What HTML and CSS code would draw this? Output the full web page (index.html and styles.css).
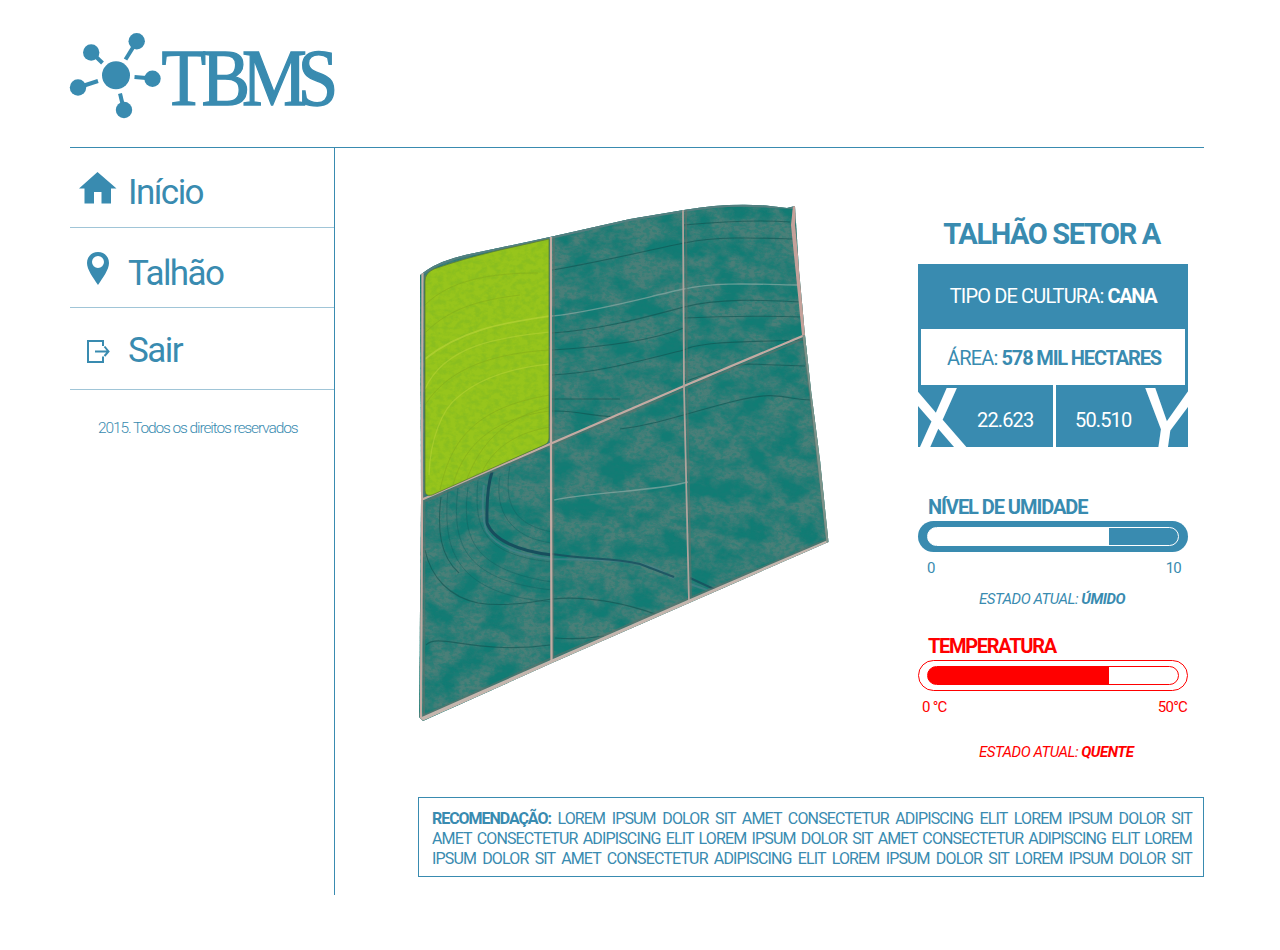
FILE: index.html
```html
<!DOCTYPE html>
<html lang="pt-BR">
<head>
<meta charset="utf-8">
<title>TBMS</title>
<link rel="stylesheet" href="styles.css">
</head>
<body>
<div class="page">
  <header class="header">
    <svg class="logo" width="270" height="90" viewBox="68 30 270 90" role="img" aria-label="TBMS">
      <g class="logo-links">
        <path d="M91 52 102.500 63"/><path d="M137 41 125.500 59.500"/><path d="M152 78.500 134.500 77"/><path d="M124 110 120 93.500"/><path d="M78 87.500 98 81"/>
      </g>
      <g class="logo-nodes">
        <circle cx="116" cy="75.300" r="14"/><circle cx="91.200" cy="52.500" r="8.200"/><circle cx="136.700" cy="41.200" r="8.200"/><circle cx="152.500" cy="78.700" r="8.200"/><circle cx="124" cy="110" r="8.200"/><circle cx="78" cy="87.500" r="8.200"/>
      </g>
      <text class="logo-text" transform="translate(161 105) scale(.9 1)" x="0.500 45 90 152" y="0">TBMS</text>
    </svg>
  </header>

  <div class="body">
    <aside class="sidebar">
      <nav class="menu">
        <a class="menu-item item-home"><svg class="menu-icon" width="38" height="34" viewBox="0 0 38 34"><path class="solid" d="M18.500 1 37.500 17.500H32V32.500H22.500V21H15V32.500H5.500V17.500H0Z"/></svg><span>Início</span></a>
        <a class="menu-item item-field"><svg class="menu-icon" width="38" height="34" viewBox="0 0 38 34"><path class="solid" fill-rule="evenodd" d="M19 0C12.500 0 8 5 8 11 8 17.500 14 25.500 19 33 24 25.500 30 17.500 30 11 30 5 25.500 0 19 0ZM19 4A6 6 0 1 1 19 16 6 6 0 1 1 19 4Z"/></svg><span>Talhão</span></a>
        <a class="menu-item item-exit"><svg class="menu-icon" width="38" height="34" viewBox="0 0 38 34"><path class="line" d="M24 12V7H9V28H24V22.500M16 17.500H29M25.500 12.500 29.500 17.500 25.500 22"/></svg><span>Sair</span></a>
      </nav>
      <p class="copyright">2015. Todos os direitos reservados</p>
    </aside>

    <main class="content">
      <div class="overview">
        <svg class="map" width="412" height="520" viewBox="418 202 412 520" role="img" aria-label="Mapa dos talhões">
          <defs>
            <filter id="patches" x="0" y="0" width="1" height="1" color-interpolation-filters="sRGB">
              <feTurbulence type="fractalNoise" baseFrequency=".035 .05" numOctaves="6" seed="21"/>
              <feColorMatrix values="0 0 0 0 .36  0 0 0 0 .5  0 0 0 0 .48  3 0 0 0 -.900"/>
            </filter>
            <filter id="grain" x="0" y="0" width="1" height="1" color-interpolation-filters="sRGB">
              <feTurbulence type="fractalNoise" baseFrequency=".2 .3" numOctaves="3" seed="3"/>
              <feColorMatrix values="0 0 0 0 .04  0 0 0 0 .5  0 0 0 0 .46  4 0 0 0 -1.700"/>
            </filter>
            <filter id="leaf-grain" x="0" y="0" width="1" height="1" color-interpolation-filters="sRGB">
              <feTurbulence type="fractalNoise" baseFrequency=".16 .2" numOctaves="3" seed="5"/>
              <feColorMatrix values="0 0 0 0 .45  0 0 0 0 .7  0 0 0 0 .15  3 0 0 0 -1.200"/>
            </filter>
            <clipPath id="land"><path d="M420 275 427 270Q440 261 465 255L550 237 630 219 684 210Q730 202 770 206L787 208 795 206 799 270 805 335 811 390 820 460 828.500 542 688 603.500 552 663 423 721 419 717 421 500Z"/></clipPath>
            <clipPath id="sector-a"><path d="M425 281Q425 273 434 269 462 259 500 250L549 239V438Q549 443 544 445L432 495Q425 497 425 490Z"/></clipPath>
          </defs>
          <g clip-path="url(#land)">
            <rect class="soil" x="418" y="202" width="412" height="520"/>
            <rect x="418" y="202" width="412" height="520" filter="url(#patches)" opacity=".75"/>
            <rect x="418" y="202" width="412" height="520" filter="url(#grain)" opacity=".4"/>
            <g class="furrow">
              <path d="M552 270C600 262 650 250 684 243S760 238 793 239"/>
              <path d="M552 333C600 330 650 316 684 307S760 300 802 302"/>
              <path d="M552 375C600 373 650 358 684 350 700 341 750 342 803 340"/>
              <path d="M684 382C700 376 735 364 750 364L805 366"/>
              <path d="M552 399H620M552 411C580 410 600 419 620 416"/>
              <path d="M620 429C660 424 690 412 735 401S780 399 812 400"/>
              <path d="M552 350Q640 345 684 328M684 318Q740 315 803 317M684 225Q750 219 790 222"/>
              <path d="M441 497C437 530 440 556 459 573M425 550C431 578 450 597 478 603 510 608 550 599 552 599"/>
              <path d="M426 645C438 632 475 655 550 645M555 638Q580 640 604 636"/>
              <path d="M552 599C590 595 630 605 655 614"/>
            </g>
            <g class="tracks">
              <path d="M468 487C463 530 465 569 552 582"/><path d="M458 488C452 540 460 580 552 590"/><path d="M448 490C443 545 450 594 552 602"/><path d="M478 480C474 525 480 555 552 562"/><path d="M500 476C494 510 510 538 552 543"/><path d="M510 466C503 505 515 525 552 532"/>
            </g>
            <path class="canal" d="M492 472C486 490 487 510 487 523 493 540 518 551 552 555"/>
            <path class="canal-edge" d="M484 485C482 500 482 520 487 532 500 550 525 556 552 559 590 560 615 559 640 564S655 570 674 578M690 584 707 590"/>
            <path class="canal-line" d="M552 554C590 560 610 557 640 564L674 577M690 578 716 590"/>
            <g class="light-track"><path d="M552 316C600 311 650 296 684 289S750 284 798 285"/><path d="M554 500C600 491 650 492 688 482"/></g>
            <g class="edge"><path d="M420 274 427 270Q440 261 465 255L550 237 630 219 684 210Q730 202 770 206L795 207"/></g>
            <g class="road-shadow"><path d="M425 275 424 720M554 238 553 662M686 210 687 386 691 602M421 503 550 446 684 389 805 338M423 716 552 658 688 599 828 539M793 210 803 335 827 540"/></g>
            <g class="road"><path d="M422.500 273 422 500 421 720M551 237 551 440 551.500 662M421 500 550 444 684 386 805 335"/><path class="narrow" d="M683 210 684 386 689 602"/></g>
            <path class="border-road" d="M422 719 552 661.500 688 602 828 542"/>
            <path class="side-road" d="M795 206 793 225 799 285 804 335"/>
            <path class="side-thin" d="M804 335 811 390 828 543"/>
          </g>
          <g clip-path="url(#sector-a)">
            <rect class="selected" x="420" y="230" width="135" height="270"/>
            <rect x="420" y="230" width="135" height="270" filter="url(#leaf-grain)" opacity=".35"/>
            <g class="selected-track">
              <path d="M425 359C460 331 500 323 550 316"/><path class="soft" d="M425 389C445 345 500 337 550 332"/><path class="faint" d="M425 305C450 280 490 273 538 273M426 332C450 308 480 300 520 295"/><path class="faint" d="M425 405C450 365 500 353 550 350M466 482C480 440 510 416 550 407"/><path class="soft" d="M429 475C430 440 442 409 458 397 480 378 510 368 550 364"/><path class="faint" d="M440 490C450 445 470 408 550 395M453 485C465 440 500 417 550 411M482 472C495 445 520 432 550 427"/>
            </g>
          </g>
          <path class="selected-edge" d="M425 281Q425 273 434 269 462 259 500 250L549 239V438Q549 443 544 445L432 495Q425 497 425 490Z"/>
        </svg>

        <section class="details">
          <h1 class="title">TALHÃO SETOR A</h1>
          <div class="card">
            <div class="culture">TIPO DE CULTURA: <b>CANA</b></div>
            <div class="area">ÁREA: <b>578 MIL HECTARES</b></div>
            <div class="coords">
              <div class="coord"><svg class="axis" width="50" height="59"><text transform="translate(19 33) rotate(-8.500)" y="35.500">X</text></svg><span class="coord-x">22.623</span></div>
              <div class="coord"><span class="coord-y">50.510</span><svg class="axis axis-y" width="50" height="59"><text transform="translate(29 33) rotate(8)" y="35.500">Y</text></svg></div>
            </div>
          </div>

          <div class="gauge humidity">
            <h2>NÍVEL DE UMIDADE</h2>
            <div class="shell"><div class="tube"><div class="fill" style="width:181px"></div></div></div>
            <div class="scale"><span>0</span><span>10</span></div>
            <p class="state">ESTADO ATUAL: <b>ÚMIDO</b></p>
          </div>
          <div class="gauge temperature">
            <h2>TEMPERATURA</h2>
            <div class="shell"><div class="tube"><div class="fill" style="width:181px"></div></div></div>
            <div class="scale"><span>0 °C</span><span>50°C</span></div>
            <p class="state">ESTADO ATUAL: <b>QUENTE</b></p>
          </div>
        </section>
      </div>
      <p class="advice"><b>RECOMENDAÇÃO:</b> LOREM IPSUM DOLOR SIT AMET CONSECTETUR ADIPISCING ELIT LOREM IPSUM DOLOR SIT<br>AMET CONSECTETUR ADIPISCING ELIT LOREM IPSUM DOLOR SIT AMET CONSECTETUR ADIPISCING ELIT LOREM<br>IPSUM DOLOR SIT AMET CONSECTETUR ADIPISCING ELIT LOREM IPSUM DOLOR SIT LOREM IPSUM DOLOR SIT</p>
    </main>
  </div>
</div>
</body>
</html>
```
FILE: styles.css
```css
* { box-sizing: border-box; }
body { margin: 0; background: #fff; color: #398bb0; font-family: Roboto, "Liberation Sans", sans-serif; }
h1, h2, p { margin: 0; }
svg { display: block; flex: none; }
.page { width: 1134px; margin-left: 70px; }

.header { height: 148px; padding-top: 30px; border-bottom: 1px solid #398bb0; }
.logo { margin-left: -2px; }
.logo-links { fill: none; stroke: #398bb0; stroke-width: 4; }
.logo-nodes { fill: #398bb0; }
.logo-text { fill: #398bb0; stroke: #398bb0; stroke-width: 1.400; font: 81px "Liberation Serif", serif; }

.body { display: flex; }
.sidebar { width: 265px; height: 747px; border-right: 1px solid #398bb0; }
.menu-item { display: flex; height: 80px; padding-left: 9px; border-bottom: 1px solid #a0c5d7; font-size: 35px; line-height: 40px; letter-spacing: -1.55px; }
.menu-icon { margin-right: 11px; }
.item-home { padding-top: 23px; }
.item-field { padding-top: 24px; }
.item-exit { height: 82px; padding-top: 26px; }
.item-home span { margin-top: 2px; }
.item-field span { margin-top: 2px; }
.item-exit span { margin-top: -3px; }
.solid { fill: #398bb0; }
.line { fill: none; stroke: #398bb0; stroke-width: 2; }
.copyright { padding: 28px 0 0 28px; font-size: 15.5px; line-height: 20px; font-weight: 300; letter-spacing: -1.1px; white-space: nowrap; }

.content { width: 869px; padding-left: 83px; }
.overview { display: flex; height: 649px; }
.map { margin-top: 54px; }
.details { width: 270px; margin-left: 88px; padding-top: 71px; }
.title { height: 45px; padding-right: 3px; text-align: center; font-size: 29px; line-height: 31px; font-weight: 700; letter-spacing: -1.4px; white-space: nowrap; }
.card { height: 183px; background: #398bb0; color: #fff; font-size: 20px; line-height: 24px; letter-spacing: -.85px; }
.card b, .gauge b, .advice b { font-weight: 700; }
.card b { letter-spacing: -1.150px; }
.culture { height: 65px; padding-top: 20px; text-align: center; }
.culture b { letter-spacing: -1.400px; }
.area { height: 56px; margin: 0 3px; padding: 17px 0 0 2px; background: #fff; color: #398bb0; text-align: center; }
.coords { display: flex; gap: 3px; height: 62px; background: linear-gradient(90deg, transparent 135px, #fff 135px, #fff 138px, transparent 138px); }
.coord { display: flex; width: 135px; padding-top: 3px; letter-spacing: -.85px; }
.coord + .coord { width: 132px; }
.axis { overflow: hidden; fill: #fff; font-size: 100px; text-anchor: middle; letter-spacing: 0; }
.coord-x { padding: 20px 0 0 9px; }
.coord-y { width: 82px; padding: 20px 0 0 19px; }

.gauge { height: 139px; }
.humidity { margin-top: 47px; }
.gauge h2 { height: 27px; padding-left: 10px; font-size: 20px; line-height: 26px; font-weight: 700; letter-spacing: -1.05px; }
.shell { height: 31px; padding: 6px 9px; border-radius: 16px; background: #398bb0; }
.tube { width: 252px; height: 19px; border: 1px solid #fff; border-radius: 10px; overflow: hidden; }
.humidity .tube { background: linear-gradient(90deg, #fff 100px, transparent 100px); }
.fill { height: 17px; background: #fff; }
.scale { display: flex; justify-content: space-between; height: 37px; padding: 6px 7px 0 9px; font-size: 15px; line-height: 20px; letter-spacing: -.75px; }
.state { padding-left: 61px; font-size: 15px; line-height: 20px; font-style: italic; letter-spacing: -.47px; white-space: nowrap; }
.temperature { color: red; }
.temperature h2 { letter-spacing: -1.300px; }
.temperature .shell { padding: 5px 8px; border: 1px solid red; background: #fff; }
.temperature .tube { border-color: red; background: linear-gradient(90deg, red 100px, transparent 100px); }
.temperature .fill { background: red; }
.temperature .scale { height: 51px; padding: 6px 1px 0 4px; }

.advice { width: 786px; height: 80px; padding: 11px 11px 0 13px; border: 1px solid #398bb0; font-size: 16px; line-height: 20px; letter-spacing: -.85px; text-align: justify; text-align-last: justify; white-space: normal; }
.advice b { letter-spacing: -1.050px; }

.soil { fill: #147b74; }
.furrow { fill: none; stroke: #12514f; stroke-width: 1.100; opacity: .6; }
.tracks { fill: none; stroke: #145f5f; stroke-width: 1; opacity: .45; }
.canal { fill: none; stroke: #174e5d; stroke-width: 3; }
.canal-edge { fill: none; stroke: #49828a; stroke-width: 2; opacity: .7; }
.canal-line { fill: none; stroke: #174e5d; stroke-width: 2; opacity: .8; }
.light-track { fill: none; stroke: #8fada7; stroke-width: 1.300; opacity: .65; }
.edge { fill: none; stroke: #557f80; stroke-width: 4; }
.road-shadow { fill: none; stroke: #5f716a; stroke-width: 2; opacity: .6; }
.road { fill: none; stroke: #c4aba3; stroke-width: 2.300; }
.road .narrow { stroke: #b0a39c; stroke-width: 1.800; }
.border-road { fill: none; stroke: #c4b5ad; stroke-width: 4; }
.side-road { fill: none; stroke: #c4a19a; stroke-width: 4; }
.side-thin { fill: none; stroke: #7e938a; stroke-width: 3; }
.selected { fill: #97c51c; }
.selected-track { fill: none; stroke: #b5d235; stroke-width: 1.800; opacity: .75; }
.selected-track .soft { stroke-width: 1.300; opacity: .8; }
.selected-track .faint { stroke: #83a91b; stroke-width: 1; opacity: .7; }
.selected-edge { fill: none; stroke: #5d7c35; stroke-width: .8; }
```
